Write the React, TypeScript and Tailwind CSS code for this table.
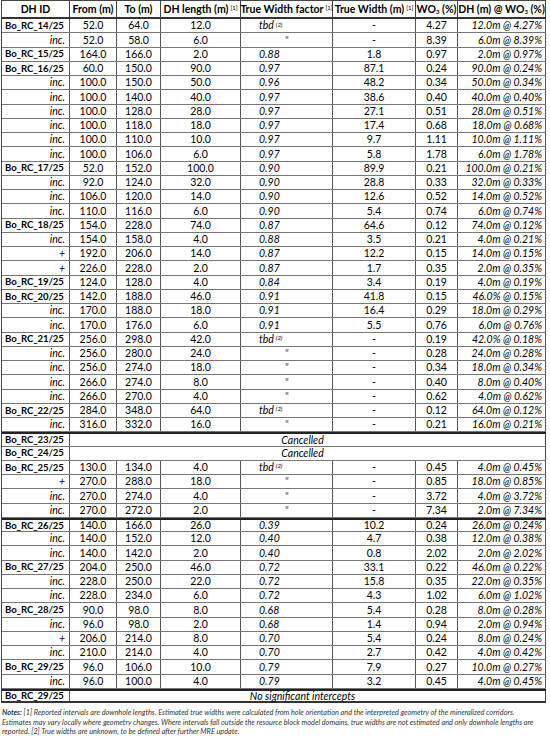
import React from "react";

type Row = {
  id: string;
  kind: "main" | "sub";
  from?: string;
  to?: string;
  len?: string;
  factor?: string;
  tw?: string;
  wo3?: string;
  dh?: string;
  span?: string;
  thickTop?: boolean;
};

const raw: (string | boolean)[][] = [
  ["Bo_RC_14/25", "52.0", "64.0", "12.0", "tbd", "-", "4.27", "12.0m @ 4.27%"],
  ["inc.", "52.0", "58.0", "6.0", '"', "-", "8.39", "6.0m @ 8.39%"],
  ["Bo_RC_15/25", "164.0", "166.0", "2.0", "0.88", "1.8", "0.97", "2.0m @ 0.97%"],
  ["Bo_RC_16/25", "60.0", "150.0", "90.0", "0.97", "87.1", "0.24", "90.0m @ 0.24%"],
  ["inc.", "100.0", "150.0", "50.0", "0.96", "48.2", "0.34", "50.0m @ 0.34%"],
  ["inc.", "100.0", "140.0", "40.0", "0.97", "38.6", "0.40", "40.0m @ 0.40%"],
  ["inc.", "100.0", "128.0", "28.0", "0.97", "27.1", "0.51", "28.0m @ 0.51%"],
  ["inc.", "100.0", "118.0", "18.0", "0.97", "17.4", "0.68", "18.0m @ 0.68%"],
  ["inc.", "100.0", "110.0", "10.0", "0.97", "9.7", "1.11", "10.0m @ 1.11%"],
  ["inc.", "100.0", "106.0", "6.0", "0.97", "5.8", "1.78", "6.0m @ 1.78%"],
  ["Bo_RC_17/25", "52.0", "152.0", "100.0", "0.90", "89.9", "0.21", "100.0m @ 0.21%"],
  ["inc.", "92.0", "124.0", "32.0", "0.90", "28.8", "0.33", "32.0m @ 0.33%"],
  ["inc.", "106.0", "120.0", "14.0", "0.90", "12.6", "0.52", "14.0m @ 0.52%"],
  ["inc.", "110.0", "116.0", "6.0", "0.90", "5.4", "0.74", "6.0m @ 0.74%"],
  ["Bo_RC_18/25", "154.0", "228.0", "74.0", "0.87", "64.6", "0.12", "74.0m @ 0.12%"],
  ["inc.", "154.0", "158.0", "4.0", "0.88", "3.5", "0.21", "4.0m @ 0.21%"],
  ["+", "192.0", "206.0", "14.0", "0.87", "12.2", "0.15", "14.0m @ 0.15%"],
  ["+", "226.0", "228.0", "2.0", "0.87", "1.7", "0.35", "2.0m @ 0.35%"],
  ["Bo_RC_19/25", "124.0", "128.0", "4.0", "0.84", "3.4", "0.19", "4.0m @ 0.19%"],
  ["Bo_RC_20/25", "142.0", "188.0", "46.0", "0.91", "41.8", "0.15", "46.0% @ 0.15%"],
  ["inc.", "170.0", "188.0", "18.0", "0.91", "16.4", "0.29", "18.0m @ 0.29%"],
  ["inc.", "170.0", "176.0", "6.0", "0.91", "5.5", "0.76", "6.0m @ 0.76%"],
  ["Bo_RC_21/25", "256.0", "298.0", "42.0", "tbd", "-", "0.19", "42.0% @ 0.18%"],
  ["inc.", "256.0", "280.0", "24.0", '"', "-", "0.28", "24.0m @ 0.28%"],
  ["inc.", "256.0", "274.0", "18.0", '"', "-", "0.34", "18.0m @ 0.34%"],
  ["inc.", "266.0", "274.0", "8.0", '"', "-", "0.40", "8.0m @ 0.40%"],
  ["inc.", "266.0", "270.0", "4.0", '"', "-", "0.62", "4.0m @ 0.62%"],
  ["Bo_RC_22/25", "284.0", "348.0", "64.0", "tbd", "-", "0.12", "64.0m @ 0.12%"],
  ["inc.", "316.0", "332.0", "16.0", '"', "-", "0.21", "16.0m @ 0.21%"],
  ["Bo_RC_23/25", "SPAN:Cancelled", true],
  ["Bo_RC_24/25", "SPAN:Cancelled"],
  ["Bo_RC_25/25", "130.0", "134.0", "4.0", "tbd", "-", "0.45", "4.0m @ 0.45%"],
  ["+", "270.0", "288.0", "18.0", '"', "-", "0.85", "18.0m @ 0.85%"],
  ["inc.", "270.0", "274.0", "4.0", '"', "-", "3.72", "4.0m @ 3.72%"],
  ["inc.", "270.0", "272.0", "2.0", '"', "-", "7.34", "2.0m @ 7.34%"],
  ["Bo_RC_26/25", "140.0", "166.0", "26.0", "0.39", "10.2", "0.24", "26.0m @ 0.24%", true],
  ["inc.", "140.0", "152.0", "12.0", "0.40", "4.7", "0.38", "12.0m @ 0.38%"],
  ["inc.", "140.0", "142.0", "2.0", "0.40", "0.8", "2.02", "2.0m @ 2.02%"],
  ["Bo_RC_27/25", "204.0", "250.0", "46.0", "0.72", "33.1", "0.22", "46.0m @ 0.22%"],
  ["inc.", "228.0", "250.0", "22.0", "0.72", "15.8", "0.35", "22.0m @ 0.35%"],
  ["inc.", "228.0", "234.0", "6.0", "0.72", "4.3", "1.02", "6.0m @ 1.02%"],
  ["Bo_RC_28/25", "90.0", "98.0", "8.0", "0.68", "5.4", "0.28", "8.0m @ 0.28%"],
  ["inc.", "96.0", "98.0", "2.0", "0.68", "1.4", "0.94", "2.0m @ 0.94%"],
  ["+", "206.0", "214.0", "8.0", "0.70", "5.4", "0.24", "8.0m @ 0.24%"],
  ["inc.", "210.0", "214.0", "4.0", "0.70", "2.7", "0.42", "4.0m @ 0.42%"],
  ["Bo_RC_29/25", "96.0", "106.0", "10.0", "0.79", "7.9", "0.27", "10.0m @ 0.27%"],
  ["inc.", "96.0", "100.0", "4.0", "0.79", "3.2", "0.45", "4.0m @ 0.45%"],
  ["Bo_RC_29/25", "SPAN:No significant intercepts", true],
];

const rows: Row[] = raw.map((r) => {
  const id = r[0] as string;
  const kind = id.startsWith("Bo_") ? "main" : "sub";
  if (typeof r[1] === "string" && (r[1] as string).startsWith("SPAN:")) {
    return { id, kind, span: (r[1] as string).slice(5), thickTop: r[2] === true };
  }
  return {
    id,
    kind,
    from: r[1] as string,
    to: r[2] as string,
    len: r[3] as string,
    factor: r[4] as string,
    tw: r[5] as string,
    wo3: r[6] as string,
    dh: r[7] as string,
    thickTop: r[8] === true,
  };
});

const grid = "grid grid-cols-[68px_47px_44px_80px_92px_83px_42px_88px]";

function Sup({ children }: { children: React.ReactNode }) {
  return (
    <sup className="text-[6px] font-normal relative -top-[1px] ml-[2px]">{children}</sup>
  );
}

function Header() {
  const cell =
    "flex items-center justify-center border-r border-[#444] font-bold whitespace-nowrap";
  return (
    <div className={`${grid} h-[19px] border-b-2 border-[#333] border-t border-t-[#444]`}>
      <div className={cell}>DH ID</div>
      <div className={cell}>From (m)</div>
      <div className={cell}>To (m)</div>
      <div className={cell}>
        DH length (m)<Sup>[1]</Sup>
      </div>
      <div className={cell}>
        True Width factor<Sup>[1]</Sup>
      </div>
      <div className={cell}>
        True Width (m)<Sup>[1]</Sup>
      </div>
      <div className={cell}>
        <span>
          WO<sub className="text-[6px] relative top-[1px]">3</sub> (%)
        </span>
      </div>
      <div className={cell}>
        <span>
          DH (m) @ WO<sub className="text-[6px] relative top-[1px]">3</sub> (%)
        </span>
      </div>
    </div>
  );
}

function DataRow({ row, last }: { row: Row; last: boolean }) {
  const c = "flex items-center border-r border-[#555] whitespace-nowrap";
  const top = row.thickTop ? "border-t-2 border-t-[#222]" : "";
  const bottom = last ? "border-b-2 border-[#333]" : "border-b border-[#777]";
  return (
    <div className={`${grid} h-[14.25px] ${bottom} ${top}`}>
      {row.kind === "main" ? (
        <div className={`${c} pl-[3px] font-bold text-[9.6px] tracking-[-0.1px]`}>{row.id}</div>
      ) : (
        <div className={`${c} justify-end pr-[4px] italic`}>{row.id}</div>
      )}
      {row.span ? (
        <div className="col-span-7 flex items-center justify-center italic pr-[10px] border-r border-[#444]">
          {row.span}
        </div>
      ) : (
        <>
          <div className={`${c} justify-center`}>{row.from}</div>
          <div className={`${c} justify-center`}>{row.to}</div>
          <div className={`${c} justify-center`}>{row.len}</div>
          {row.factor === '"' ? (
            <div className={`${c} justify-center italic text-[#555]`}>{'"'}</div>
          ) : row.factor === "tbd" ? (
            <div className={`${c} pl-[18px] italic`}>
              tbd<Sup>(2)</Sup>
            </div>
          ) : (
            <div className={`${c} pl-[18px] italic`}>{row.factor}</div>
          )}
          <div className={`${c} justify-center`}>{row.tw}</div>
          <div className={`${c} justify-center`}>{row.wo3}</div>
          <div className={`${c} justify-end pr-[3px] italic`}>{row.dh}</div>
        </>
      )}
    </div>
  );
}

export default function App() {
  return (
    <div
      className="w-[550px] h-[749px] bg-white text-black overflow-hidden"
      style={{ fontFamily: "Lato, 'Liberation Sans', sans-serif" }}
    >
      <div className="ml-[1px] w-[545px] border-l border-[#444] text-[10.5px] leading-none">
        <Header />
        {rows.map((r, i) => (
          <DataRow key={i} row={r} last={i === rows.length - 1} />
        ))}
      </div>
      <div className="mt-[5px] pl-[2px] text-[7.3px] leading-[9.6px] italic text-[#333] whitespace-nowrap">
        <span className="font-bold">Notes:</span> [1] Reported intervals are downhole lengths. Estimated true widths were calculated from hole orientation and the interpreted geometry of the mineralized corridors.
        <br />
        Estimates may vary locally where geometry changes. Where intervals fall outside the resource block model domains, true widths are not estimated and only downhole lengths are
        <br />
        reported. [2] True widths are unknown, to be defined after further MRE update.
      </div>
    </div>
  );
}
